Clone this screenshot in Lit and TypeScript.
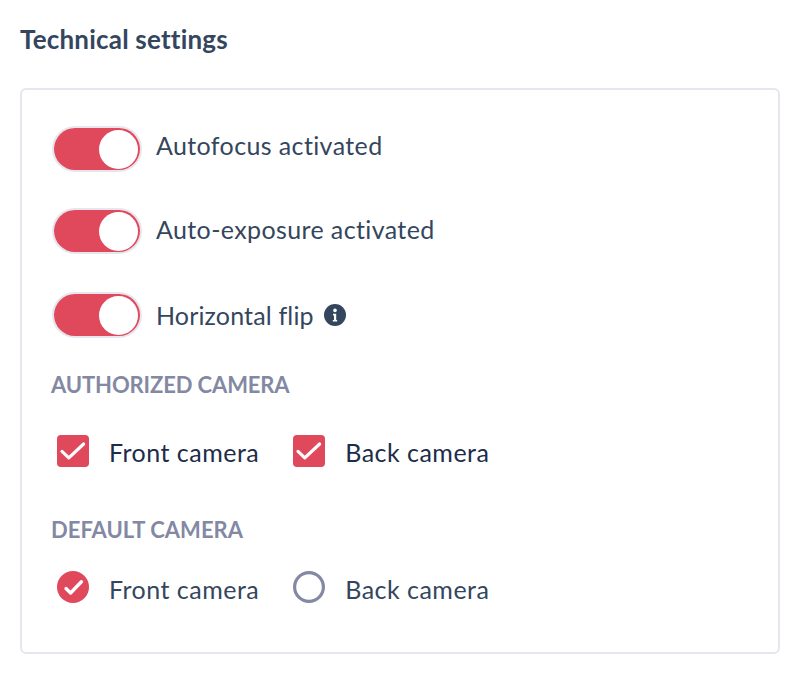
import { LitElement, html, css, svg } from "lit";
import { customElement } from "lit/decorators.js";

const check = svg`<path d="M5 16.4 L11.8 22.8 L26.6 9" fill="none" stroke="#fff" stroke-width="3.2" stroke-linecap="round" stroke-linejoin="round"/>`;

@customElement("app-root")
export class AppRoot extends LitElement {
  static styles = css`
    :host { display: block; width: 800px; height: 680px; background: #fff; font-family: "Lato", "Open Sans", sans-serif; color: #34465e; overflow: hidden; }
    .page { padding: 23px 20px 0; display: flex; flex-direction: column; }
    h1 { margin: 0; font-size: 26px; line-height: 32px; font-weight: 700; letter-spacing: 0.2px; color: #34465e; }
    .card { margin-top: 33px; box-sizing: border-box; width: 760px; height: 566px; border: 2px solid #e6e6ee; border-radius: 6px; padding: 36px 30px 0; display: flex; flex-direction: column; }
    .row { display: flex; align-items: center; gap: 14px; height: 46px; font-size: 25px; }
    .row + .row { margin-top: 36px; }
    .row.third { margin-top: 38px; }
    .toggle { box-sizing: border-box; width: 90px; height: 46px; border: 2px solid #e6e6ee; border-radius: 23px; background: #fff; flex: none; }
    .track { height: 100%; border-radius: 21px; background: #e0485c; display: flex; justify-content: flex-end; align-items: center; padding: 0 2px; box-sizing: border-box; }
    .knob { width: 39px; height: 39px; border-radius: 50%; background: #fff; }
    .label { white-space: nowrap; letter-spacing: 0.38px; }
    .label.tight { letter-spacing: 0.16px; }
    .up8 { margin-bottom: 8px; }
    .up4 { margin-bottom: 4px; }
    .info { width: 22px; height: 22px; margin-left: -4px; flex: none; }
    h2 { margin: 0 0 0 -1px; font-size: 22px; line-height: 28px; font-weight: 700; letter-spacing: -0.12px; color: #8389a3; }
    .auth { margin-top: 33px; }
    .def { margin-top: 49px; letter-spacing: 0.02px; }
    .opts { display: flex; align-items: center; padding-left: 5px; font-size: 25px; }
    .auth-opts { margin-top: 36px; color: #1c2d4a; }
    .auth-opts span { margin-top: 2px; }
    .def-opts { margin-top: 27px; color: #34465e; }
    .def-opts span { margin-top: 4px; }
    .opt { display: flex; align-items: center; gap: 20px; height: 32px; margin-right: 34px; white-space: nowrap; letter-spacing: 0.48px; }
    svg.mark { width: 32px; height: 32px; flex: none; display: block; }
  `;

  private toggle(label: string, labelCls = "", extra: unknown = null, cls = "") {
    return html`<div class="row ${cls}">
      <div class="toggle"><div class="track"><div class="knob"></div></div></div>
      <span class="label ${labelCls}">${label}</span>${extra}
    </div>`;
  }

  private box() {
    return html`<svg class="mark" viewBox="0 0 32 32"><rect width="32" height="32" rx="4" fill="#e0485c"/>${check}</svg>`;
  }

  private radio(on: boolean) {
    return on
      ? html`<svg class="mark" viewBox="0 0 32 32"><circle cx="16" cy="16" r="16" fill="#e0485c"/><path d="M9 17.6 L13.6 22 L24.4 10.8" fill="none" stroke="#fff" stroke-width="3.4" stroke-linecap="round" stroke-linejoin="round"/></svg>`
      : html`<svg class="mark" viewBox="0 0 32 32"><circle cx="16" cy="16" r="14.4" fill="#fff" stroke="#8389a3" stroke-width="3.2"/></svg>`;
  }

  render() {
    const info = html`<svg class="info" viewBox="0 0 22 22"><circle cx="11" cy="11" r="11" fill="#34465e"/><circle cx="11" cy="6.4" r="1.8" fill="#fff"/><path d="M9 9.8h3.2v6.2h1v1.6H8.8V16h1.2v-4.6H9z" fill="#fff"/></svg>`;
    return html`<div class="page">
      <h1>Technical settings</h1>
      <div class="card">
        ${this.toggle("Autofocus activated", "up8")}
        ${this.toggle("Auto-exposure activated", "up4")}
        ${this.toggle("Horizontal flip", "tight", info, "third")}
        <h2 class="auth">AUTHORIZED CAMERA</h2>
        <div class="opts auth-opts">
          <div class="opt">${this.box()}<span>Front camera</span></div>
          <div class="opt">${this.box()}<span>Back camera</span></div>
        </div>
        <h2 class="def">DEFAULT CAMERA</h2>
        <div class="opts def-opts">
          <div class="opt">${this.radio(true)}<span>Front camera</span></div>
          <div class="opt">${this.radio(false)}<span>Back camera</span></div>
        </div>
      </div>
    </div>`;
  }
}
